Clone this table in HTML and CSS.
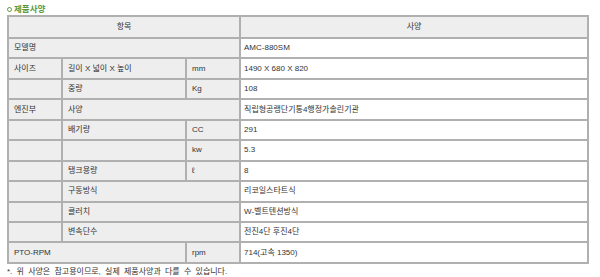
FILE: index.html
```html
<!DOCTYPE html>
<html lang="ko">
<head>
<meta charset="utf-8">
<link rel="stylesheet" href="styles.css">
</head>
<body>
<div class="wrap">
  <div class="title"><span class="dot"></span>제품사양</div>
  <table class="spec">
    <colgroup>
      <col class="c1"><col class="c2"><col class="c3"><col class="c4">
    </colgroup>
    <tr class="head"><td colspan="3" class="lab center">항목</td><td class="lab center">사양</td></tr>
    <tr><td colspan="3" class="lab">모델명</td><td class="val">AMC-880SM</td></tr>
    <tr><td class="lab">사이즈</td><td class="lab">길이 X 넓이 X 높이</td><td class="lab">mm</td><td class="val">1490 X 680 X 820</td></tr>
    <tr><td class="lab"></td><td class="lab">중량</td><td class="lab">Kg</td><td class="val">108</td></tr>
    <tr><td class="lab">엔진부</td><td colspan="2" class="lab">사양</td><td class="val">직립형공랭단기통4행정가솔린기관</td></tr>
    <tr><td class="lab"></td><td class="lab">배기량</td><td class="lab">CC</td><td class="val">291</td></tr>
    <tr><td class="lab"></td><td class="lab"></td><td class="lab">kw</td><td class="val">5.3</td></tr>
    <tr><td class="lab"></td><td class="lab">탱크용량</td><td class="lab">ℓ</td><td class="val">8</td></tr>
    <tr><td class="lab"></td><td colspan="2" class="lab">구동방식</td><td class="val">리코일스타트식</td></tr>
    <tr><td class="lab"></td><td colspan="2" class="lab">클러치</td><td class="val">W-벨트텐션방식</td></tr>
    <tr><td class="lab"></td><td colspan="2" class="lab">변속단수</td><td class="val">전진4단 후진4단</td></tr>
    <tr><td colspan="2" class="lab">PTO-RPM</td><td class="lab">rpm</td><td class="val">714(고속 1350)</td></tr>
  </table>
  <p class="note">*. 위 사양은 참고용이므로, 실제 제품사양과 다를 수 있습니다.</p>
</div>
</body>
</html>
```
FILE: styles.css
```css
html, body {
  margin: 0;
  padding: 0;
  background: #ffffff;
}
.wrap {
  padding: 3px 7px 0 7px;
  font-family: "Liberation Sans", "Noto Sans CJK KR", sans-serif;
  font-size: 8px;
  color: #333333;
}
.title {
  display: flex;
  align-items: center;
  gap: 2px;
  height: 12px;
  color: #5a9a3c;
  font-weight: bold;
  font-size: 8.5px;
  line-height: 12px;
}
.dot {
  width: 3px;
  height: 3px;
  border: 1px solid #5a9a3c;
  border-radius: 50%;
}
.spec {
  border-collapse: collapse;
  width: 580px;
  table-layout: fixed;
  border: 2px solid #adadad;
}
.c1 { width: 54px; }
.c2 { width: 124px; }
.c3 { width: 54px; }
.c4 { width: 348px; }
.spec td {
  border: 2px solid #b0b0b0;
  padding: 0 5px;
  height: 18.45px;
  line-height: 10px;
  white-space: nowrap;
  vertical-align: middle;
}
.spec td.val {
  padding-left: 3px;
}
.spec .head td {
  height: 20px;
}
.spec td.lab {
  background: #eeeeee;
}
.spec td.center {
  text-align: center;
}
.note {
  margin: 3px 0 0 0;
  font-size: 8px;
  line-height: 10px;
  word-spacing: 2px;
  color: #333333;
}
```
